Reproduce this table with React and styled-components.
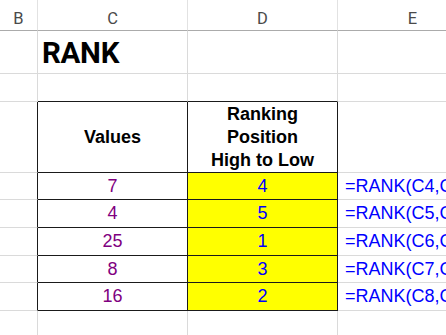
import React from "react";
import styled, { createGlobalStyle } from "styled-components";

const Global = createGlobalStyle`
  html, body { margin: 0; padding: 0; background: #ffffff; overflow: hidden; }
  #root { width: 446px; height: 335px; overflow: hidden; }
`;

const GRID = "#dadada";
const DARK = "#1a1a1a";

const Sheet = styled.div`
  display: grid;
  grid-template-columns: 38px 150px 150px 150px;
  grid-template-rows: 31px 43px 28px 71px 27px 28px 28px 27px 28px 40px;
  width: 488px;
  height: 335px;
  background: #ffffff;
`;

const Cell = styled.div`
  box-sizing: border-box;
  border-right: 1px solid ${(p) => (p.$rb ? DARK : GRID)};
  border-bottom: 1px solid ${(p) => (p.$bb ? DARK : GRID)};
  background: ${(p) => p.$bg || "#ffffff"};
  display: flex;
  align-items: center;
  justify-content: center;
  overflow: hidden;
  white-space: nowrap;
  font-family: "Liberation Sans", Arial, sans-serif;
  font-size: 18px;
`;

const ColHeader = styled(Cell)`
  border-right: 1px solid #e2e2e2;
  border-bottom: 1px solid #ababab;
  align-items: flex-end;
  padding-bottom: 2px;
  font-family: Roboto, "Noto Sans", sans-serif;
  font-size: 16.5px;
  font-weight: 400;
  color: #4a4a4a;
`;

const TitleCell = styled(Cell)`
  justify-content: flex-start;
  padding-left: 4px;
  padding-top: 2px;
  font-family: Roboto, "Noto Sans", sans-serif;
  font-size: 29.5px;
  font-weight: 700;
  color: #000000;
  letter-spacing: -0.3px;
`;

const TableHead = styled(Cell)`
  flex-direction: column;
  font-weight: 700;
  color: #000000;
  line-height: 23px;
  text-align: center;
`;

const ValueCell = styled(Cell)`
  color: ${(p) => p.$ink};
`;

const FormulaCell = styled(Cell)`
  justify-content: flex-start;
  padding-left: 7px;
  color: #0000ff;
`;

const values = [7, 4, 25, 8, 16];
const ranks = [4, 5, 1, 3, 2];

export default function App() {
  return (
    <>
      <Global />
      <Sheet>
        <ColHeader>B</ColHeader>
        <ColHeader>C</ColHeader>
        <ColHeader>D</ColHeader>
        <ColHeader>E</ColHeader>

        <Cell />
        <TitleCell>RANK</TitleCell>
        <Cell />
        <Cell />

        <Cell />
        <Cell $bb />
        <Cell $bb />
        <Cell />

        <Cell $rb />
        <TableHead $rb $bb>Values</TableHead>
        <TableHead $rb $bb>
          <span>Ranking</span>
          <span>Position</span>
          <span>High to Low</span>
        </TableHead>
        <Cell />

        {values.map((v, i) => (
          <React.Fragment key={i}>
            <Cell $rb />
            <ValueCell $rb $bb $ink="#800080">{v}</ValueCell>
            <ValueCell $rb $bb $ink="#0000ff" $bg="#ffff00">{ranks[i]}</ValueCell>
            <FormulaCell>{`=RANK(C${i + 4},C$4:C$8,0)`}</FormulaCell>
          </React.Fragment>
        ))}

        <Cell />
        <Cell />
        <Cell />
        <Cell />
      </Sheet>
    </>
  );
}
